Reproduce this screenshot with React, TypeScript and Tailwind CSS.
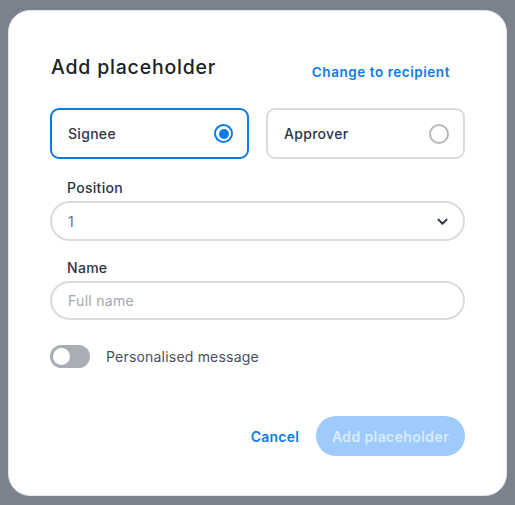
import { useState } from "react"

function Radio({ checked }: { checked: boolean }) {
  return checked ? (
    <span className="w-[19px] h-[19px] rounded-full border-2 border-[#0b7be6] flex items-center justify-center">
      <span className="w-[10px] h-[10px] rounded-full bg-[#0b7be6]" />
    </span>
  ) : (
    <span className="w-[20px] h-[20px] rounded-full border-2 border-[#b4b8be]" />
  )
}

function RoleCard({ label, checked, onClick }: { label: string; checked: boolean; onClick: () => void }) {
  return (
    <button
      onClick={onClick}
      className={
        checked
          ? "flex-1 h-[51px] rounded-[9px] border-2 border-[#0b7be6] flex items-center justify-between pl-[16px] pr-[14px] text-left"
          : "flex-1 h-[51px] rounded-[9px] border-2 border-[#d8dbdf] flex items-center justify-between pl-[16px] pr-[14px] text-left"
      }
    >
      <span className="text-[14px] font-medium text-[#2e3544] tracking-[0.3px]">{label}</span>
      <Radio checked={checked} />
    </button>
  )
}

export default function App() {
  const [role, setRole] = useState("signee")
  return (
    <div
      className="w-[515px] h-[505px] bg-[#7b828e] pt-[10px] pl-[8px]"
      style={{ fontFamily: "Inter, 'Noto Sans', sans-serif" }}
    >
      <div className="w-[499px] h-[486px] bg-white rounded-[22px] border border-[#e3e5e8] pt-[42px] px-[41px] flex flex-col">
        <div className="flex items-center justify-between h-[28px]">
          <h2 className="text-[19.5px] font-medium text-[#1d2226] tracking-[0.8px] pl-[1px] leading-[28px]">Add placeholder</h2>
          <a href="#" className="text-[13.5px] font-semibold text-[#0b7be6] tracking-[0.55px] mt-[10px] pr-[15px]">
            Change to recipient
          </a>
        </div>

        <div className="flex gap-[17px] mt-[27px]">
          <RoleCard label="Signee" checked={role === "signee"} onClick={() => setRole("signee")} />
          <RoleCard label="Approver" checked={role === "approver"} onClick={() => setRole("approver")} />
        </div>

        <label className="text-[14px] leading-[20px] font-medium text-[#2e3544] tracking-[0.3px] pl-[17px] mt-[19px]">Position</label>
        <div className="mt-[3px] h-[40px] rounded-full border-2 border-[#d8dbdf] flex items-center justify-between pl-[16px] pr-[13px]">
          <span className="text-[14px] text-[#6b7280]">1</span>
          <svg width="15" height="15" viewBox="0 0 24 24" fill="none" stroke="#2e3544" strokeWidth="3.2" strokeLinecap="round" strokeLinejoin="round">
            <path d="M5.5 9l6.5 6.5 6.5-6.5" />
          </svg>
        </div>

        <label className="text-[14px] leading-[20px] font-medium text-[#2e3544] tracking-[0.3px] pl-[17px] mt-[17px]">Name</label>
        <input
          placeholder="Full name"
          className="mt-[3px] h-[39px] rounded-full border-2 border-[#d8dbdf] px-[16px] text-[14px] tracking-[0.3px] text-[#2e3544] placeholder:text-[#a3a8b0] outline-none"
        />

        <div className="flex items-center gap-[16px] mt-[25px]">
          <span className="w-[40px] h-[23px] rounded-full bg-[#a9adb5] flex items-center pl-[3px]">
            <span className="w-[17px] h-[17px] rounded-full bg-white" />
          </span>
          <span className="text-[14px] text-[#4a5061] tracking-[0.2px]">Personalised message</span>
        </div>

        <div className="flex items-center justify-end gap-[17px] mt-[48px]">
          <button className="text-[14px] font-semibold text-[#0b7be6] tracking-[0.2px]">Cancel</button>
          <button className="h-[40px] w-[149px] rounded-full bg-[#9ecbfb] text-[14px] font-semibold text-[#d8ebfe] tracking-[0.4px]">
            Add placeholder
          </button>
        </div>
      </div>
    </div>
  )
}
